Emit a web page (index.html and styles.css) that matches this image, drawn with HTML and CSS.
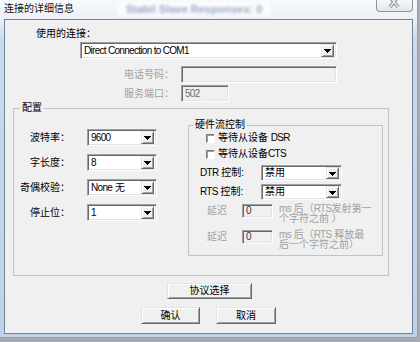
FILE: index.html
```html
<!DOCTYPE html>
<html>
<head>
<meta charset="utf-8">
<title>连接的详细信息</title>
<link rel="stylesheet" href="styles.css">
</head>
<body>
<div class="win">
  <div class="titlebar">
    <span class="title">连接的详细信息</span>
    <span class="ghost">Stabil Slave Responses: 0</span>
    <span class="close"><svg width="13" height="10" viewBox="0 0 13 10"><path d="M2 -3L10 7M10 -3L2 7" stroke="#7b828d" stroke-width="3.4" fill="none"/><path d="M2 -3L10 7M10 -3L2 7" stroke="#f4f6f9" stroke-width="1.4" fill="none"/></svg></span>
  </div>
  <div class="client">
    <div class="conn-label">使用的连接：</div>
    <div class="combo conn"><span class="val en">Direct Connection to COM1</span><span class="drop"><svg width="7" height="4" viewBox="0 0 7 4"><path d="M0 0h7v1H0zM1 1h5v1H1zM2 2h3v1H2zM3 3h1v1H3z" fill="#000"/></svg></span></div>
    <div class="frow phone"><span class="flabel dis">电话号码：</span><span class="edit dis-edit w-phone"></span></div>
    <div class="frow port"><span class="flabel dis">服务端口：</span><span class="edit dis-edit w-port en">502</span></div>

    <fieldset class="grp cfg">
      <legend>配置</legend>
      <div class="cfg-body">
        <div class="params">
          <span class="plabel">波特率：</span>
          <div class="combo pc"><span class="val en">9600</span><span class="drop"><svg width="7" height="4" viewBox="0 0 7 4"><path d="M0 0h7v1H0zM1 1h5v1H1zM2 2h3v1H2zM3 3h1v1H3z" fill="#000"/></svg></span></div>
          <span class="plabel">字长度：</span>
          <div class="combo pc"><span class="val en">8</span><span class="drop"><svg width="7" height="4" viewBox="0 0 7 4"><path d="M0 0h7v1H0zM1 1h5v1H1zM2 2h3v1H2zM3 3h1v1H3z" fill="#000"/></svg></span></div>
          <span class="plabel">奇偶校验：</span>
          <div class="combo pc"><span class="val"><span class="en">None</span> 无</span><span class="drop"><svg width="7" height="4" viewBox="0 0 7 4"><path d="M0 0h7v1H0zM1 1h5v1H1zM2 2h3v1H2zM3 3h1v1H3z" fill="#000"/></svg></span></div>
          <span class="plabel">停止位：</span>
          <div class="combo pc"><span class="val en">1</span><span class="drop"><svg width="7" height="4" viewBox="0 0 7 4"><path d="M0 0h7v1H0zM1 1h5v1H1zM2 2h3v1H2zM3 3h1v1H3z" fill="#000"/></svg></span></div>
        </div>

        <fieldset class="grp hw">
          <legend>硬件流控制</legend>
          <div class="chk"><span class="box"></span><span>等待从设备 <span class="en">DSR</span></span></div>
          <div class="chk"><span class="box"></span><span>等待从设备<span class="en">CTS</span></span></div>
          <div class="ctl dtr"><span class="clabel"><span class="en">DTR</span> 控制:</span><div class="combo cc"><span class="val">禁用</span><span class="drop"><svg width="7" height="4" viewBox="0 0 7 4"><path d="M0 0h7v1H0zM1 1h5v1H1zM2 2h3v1H2zM3 3h1v1H3z" fill="#000"/></svg></span></div></div>
          <div class="ctl rts"><span class="clabel"><span class="en">RTS</span> 控制:</span><div class="combo cc"><span class="val">禁用</span><span class="drop"><svg width="7" height="4" viewBox="0 0 7 4"><path d="M0 0h7v1H0zM1 1h5v1H1zM2 2h3v1H2zM3 3h1v1H3z" fill="#000"/></svg></span></div></div>
          <div class="delay d1"><span class="dlabel">延迟</span><span class="edit dis-edit w-delay en">0</span><span class="dnote"><span class="en">ms</span> 后（<span class="en">RTS</span>发射第一<br>个字符之前 ）</span></div>
          <div class="delay d2"><span class="dlabel">延迟</span><span class="edit dis-edit w-delay en">0</span><span class="dnote"><span class="en">ms</span> 后（<span class="en">RTS</span> 释放最<br>后一个字符之前）</span></div>
        </fieldset>
      </div>
    </fieldset>

    <div class="btn proto">协议选择</div>
    <div class="btnrow">
      <div class="btn ok">确认</div>
      <div class="btn cancel">取消</div>
    </div>
  </div>
</div>
</body>
</html>
```
FILE: styles.css
```css
* { box-sizing: border-box; }
html, body { margin: 0; padding: 0; }
body {
  width: 420px;
  height: 342px;
  overflow: hidden;
  background: #a7abb1;
  font: 10px/12px "Liberation Sans", "Noto Sans CJK SC", sans-serif;
  color: #000;
}
.en { letter-spacing: -0.7px; }

.win {
  width: 418px;
  height: 338px;
  display: flex;
  flex-direction: column;
  padding: 0 5px 4px 4px;
  background: linear-gradient(#f7f9fc 0, #edf2f8 16px, #cbdaec 40px, #bfd2e8 100%);
  box-shadow: inset -1px -1px #8ea3bd;
}

.titlebar {
  height: 19px;
  flex: none;
  display: flex;
  align-items: flex-start;
}
.title {
  margin-top: 3px;
  color: #111;
  text-shadow: 0 0 4px #fff;
}
.ghost {
  margin: 2px 0 0 44px;
  color: #94a6c2;
  font: bold 11px "Liberation Sans", sans-serif;
  filter: blur(1.4px);
  background: rgba(255,255,255,.7);
  padding: 1px 8px;
}
.close {
  margin-left: auto;
  width: 37px;
  height: 12px;
  border: 1px solid #8b929c;
  border-top: 0;
  border-radius: 0 0 4px 4px;
  background: linear-gradient(#f7f8fa, #e1e6ec);
  display: flex;
  justify-content: center;
  align-items: flex-start;
}

.client {
  flex: 1;
  background: #f0f0f0;
  border: 1px solid #6f829b;
  display: flex;
  flex-direction: column;
  align-items: flex-start;
}

.conn-label { margin: 8px 0 0 31px; }

.combo {
  height: 17px;
  background: #fff;
  border: 1px solid;
  border-color: #a0a0a0 #fff #fff #a0a0a0;
  box-shadow: inset 1px 1px #696969, inset -1px -1px #e3e3e3;
  display: flex;
  align-items: center;
  padding: 2px;
}
.combo .val {
  flex: 1;
  padding-left: 1px;
  white-space: nowrap;
  overflow: hidden;
}
.drop {
  width: 13px;
  height: 13px;
  flex: none;
  background: #f0f0f0;
  border: 1px solid;
  border-color: #e3e3e3 #696969 #696969 #e3e3e3;
  box-shadow: inset 1px 1px #fff, inset -1px -1px #a0a0a0;
  display: flex;
  align-items: center;
  justify-content: center;
  padding-top: 1px;
}
.drop svg { display: block; shape-rendering: crispEdges; }

.conn { margin: 2px 0 0 75px; width: 257px; }

.frow { display: flex; align-items: center; }
.phone { margin-top: 7px; }
.port { margin-top: 2px; }
.flabel { width: 169px; margin-right: 7px; text-align: right; }
.dis { color: #a0a0a0; }

.edit {
  height: 17px;
  border: 1px solid;
  border-color: #a0a0a0 #fff #fff #a0a0a0;
  box-shadow: inset 1px 1px #696969, inset -1px -1px #e3e3e3;
  padding: 0 3px;
  display: flex;
  align-items: center;
}
.dis-edit { background: #f0f0f0; color: #6d6d6d; }
.w-phone { width: 156px; }
.w-port { width: 48px; }

fieldset { margin: 0; padding: 0; min-width: 0; }
.grp { border: 1px solid #c3c3c3; }
.grp > legend { margin-left: 6px; padding: 0 2px; line-height: 12px; }

.cfg { margin-left: 8px; width: 376px; padding: 0 0 19px 0; }
.cfg-body { display: flex; align-items: flex-start; }

.params {
  width: 174px;
  padding-top: 15px;
  display: grid;
  grid-template-columns: 56px 70px;
  column-gap: 17px;
  row-gap: 8px;
  align-items: center;
}
.plabel { text-align: right; white-space: nowrap; }
.pc { width: 70px; }

.hw { width: 195px; margin-top: 5px; padding: 0 0 5px 0; }
.hw > legend { margin-left: 4px; }

.chk { height: 16px; display: flex; align-items: flex-start; padding: 1px 0 0 17px; }
.box {
  width: 9px;
  height: 9px;
  margin: 2px 3px 0 0;
  background: #fff;
  border: 1px solid;
  border-color: #7a7a7a #fff #fff #7a7a7a;
  box-shadow: inset 1px 1px #a0a0a0;
}

.ctl { display: flex; align-items: center; padding-left: 11px; }
.dtr { margin-top: 2px; }
.rts { margin-top: 3px; }
.clabel { width: 61px; white-space: nowrap; }
.cc { width: 81px; height: 16px; }
.cc .drop { height: 12px; }

.delay { display: flex; align-items: flex-start; padding-left: 18px; color: #a0a0a0; }
.d1 { margin-top: 4px; }
.d2 { margin-top: 6px; }
.dlabel { width: 35px; line-height: 14px; }
.w-delay { width: 31px; height: 14px; color: #333; }
.dnote { margin-left: 6px; line-height: 10px; font-size: 10px; white-space: nowrap; }

.btn {
  display: flex;
  align-items: center;
  justify-content: center;
  background: #f0f0f0;
  border: 1px solid;
  border-color: #e3e3e3 #696969 #696969 #e3e3e3;
  box-shadow: inset 1px 1px #fff, inset -1px -1px #a0a0a0;
}
.proto { margin: 7px 0 0 162px; width: 85px; height: 16px; }
.btnrow { margin: 8px 0 0 136px; display: flex; gap: 16px; }
.ok { width: 59px; height: 17px; }
.cancel { width: 60px; height: 17px; }
```
